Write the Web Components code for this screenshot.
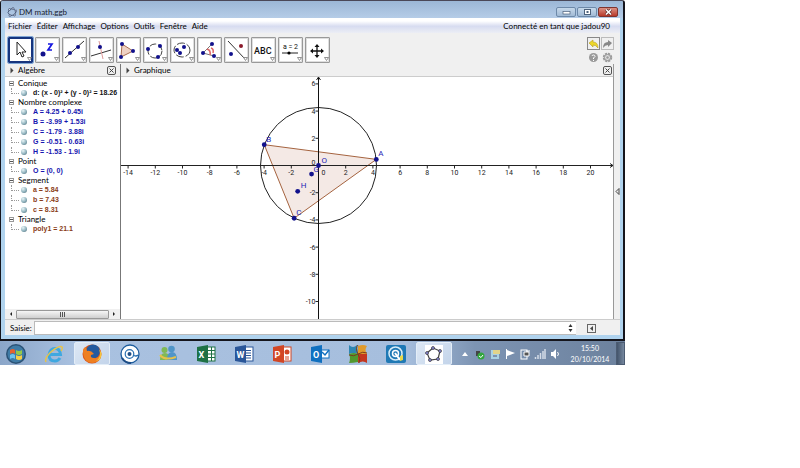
<!DOCTYPE html>
<html lang="fr">
<head>
<meta charset="utf-8">
<title>DM math.ggb</title>
<style>
body{margin:0;background:#fff;font:8px/10px Lato,"Liberation Sans",sans-serif;color:#000}
main{margin-right:175px}
</style>
</head>
<body>
<main>
<app-window name="DM math.ggb">
  <menu-bar slot="menu" account="Connecté en tant que jadou90"></menu-bar>
  <tool-bar slot="tools"></tool-bar>
  <algebra-view slot="algebra"></algebra-view>
  <graph-view slot="graph"></graph-view>
  <input-bar slot="input"></input-bar>
</app-window>
<task-bar></task-bar>
</main>
<script>
const BASE = `<style>:host,*{box-sizing:border-box}:host{display:block}button{font:inherit;color:inherit;border:0;background:none;padding:0;margin:0}svg{display:block}</style>`;
const define = (name, render) => customElements.define(name, class extends HTMLElement {
  constructor(){ super(); this.attachShadow({mode:'open'}); }
  connectedCallback(){ this.shadowRoot.innerHTML = BASE + render(this); }
});
const dot = (x,y,r=2) => `<circle cx="${x}" cy="${y}" r="${r}" fill="#11118c"/>`;

define('app-window', el => `<style>
:host{background:#b0d3ee;border:1px solid #15151c;border-top-color:#4a4858;border-right-width:2px;border-bottom-width:2px;border-radius:3px 3px 0 0}
header{display:flex;align-items:center;height:17px;padding:4px 5px 0 6px;background:linear-gradient(#9bb7d6,#b5cce7);border-radius:2px 2px 0 0}
h1{flex:1;margin:0 0 0 2px;font-size:8px;font-weight:400;line-height:12px;color:#16202e}
.ctl{display:flex;gap:1px}
.ctl button{width:20px;height:10px;border:1px solid #6d89a9;border-radius:2px;background:linear-gradient(#c6d8ea,#a1bad5);display:grid;place-items:center}
.ctl .x{background:linear-gradient(#dc9083,#b8392a);border-color:#7e342f}
.body{margin:0 3px 4px 4px;background:#f0f0f0}
.views{display:flex}
.left{flex:none;width:116px;border-right:1px solid #777}
.right{flex:1;min-width:0}
.side{flex:none;width:7px;border-left:1px solid #999;display:grid;place-items:center;padding-top:0}
</style>
<header><svg width="10" height="10" viewBox="0 0 10 10" fill="none" stroke="#33415f"><path d="M2.500 2.500 6 1.500 9 4 7.500 8 3 8.500 1 5.500Z" stroke-width=".8"/><g fill="#cfd9ee" stroke-width=".6"><circle cx="2.500" cy="2.500" r="1"/><circle cx="6" cy="1.500" r="1"/><circle cx="9" cy="4" r="1"/><circle cx="7.500" cy="8" r="1"/><circle cx="3" cy="8.500" r="1"/></g></svg><h1>${el.getAttribute('name')}</h1>
<div class="ctl"><button aria-label="Réduire"><svg width="9" height="8"><rect x="1" y="3.500" width="7" height="2.500" fill="#fff" stroke="#4d627c" stroke-width=".7"/></svg></button><button aria-label="Agrandir"><svg width="9" height="8"><rect x="1.500" y="1.500" width="6" height="5" fill="#fff" stroke="#4d627c"/><rect x="3.500" y="3" width="2" height="2" fill="#4d627c"/></svg></button><button class="x" aria-label="Fermer"><svg width="9" height="8"><path d="M2 1.500 7 6.500M7 1.500 2 6.500" stroke="#5c2d2c" stroke-width="3"/><path d="M2 1.500 7 6.500M7 1.500 2 6.500" stroke="#fff" stroke-width="1.600"/></svg></button></div></header>
<div class="body"><slot name="menu"></slot><slot name="tools"></slot>
<div class="views"><div class="left"><slot name="algebra"></slot></div><div class="right"><slot name="graph"></slot></div><div class="side"><svg width="5" height="8"><path d="M4 .5v6L1 3.500Z" fill="none" stroke="#444"/></svg></div></div>
<slot name="input"></slot></div>`);

define('menu-bar', el => `<style>
nav{display:flex;align-items:center;height:15px;padding:2px 10px 0 3px;gap:5px;background:linear-gradient(#fff 20%,#d7dcf0 55%,#eceef5)}
button{line-height:11px}
span{margin-left:auto;line-height:11px}
</style><nav>${['Fichier','Éditer','Affichage','Options','Outils','Fenêtre','Aide'].map(t=>`<button>${t}</button>`).join('')}<span>${el.getAttribute('account')}</span></nav>`);

const TOOLS = [
 ['Déplacer',`<path d="M8 4v13l3-3 2 5 2-1-2-4h4Z" fill="#fff" stroke="#222"/>`],
 ['Point',dot(7,16,2.5)+`<path d="M12 6h4l-4 6h4" fill="none" stroke="#1616e0" stroke-width="1.700"/>`],
 ['Droite',`<path d="M2 20 21 3" stroke="#333"/>`+dot(7,15)+dot(15,9)],
 ['Perpendiculaire',`<path d="M1 18 21 12" stroke="#333"/><path d="M9 3l4 18" stroke="#d99"/>`+dot(10,9)],
 ['Polygone',`<path d="M5 6 16 13 4 19Z" fill="#eed1c4" stroke="#a86d50"/>`+dot(5,6)+dot(16,13)+dot(4,19)],
 ['Cercle',`<circle cx="11" cy="13" r="7" fill="none" stroke="#444" stroke-dasharray="7 2"/>`+dot(4,11)+dot(16,8)+dot(14,19)],
 ['Ellipse',`<ellipse cx="11" cy="12" rx="8" ry="7" fill="none" stroke="#444" stroke-dasharray="8 2"/>`+dot(6,12)+dot(13,9)+dot(9,15)],
 ['Angle',`<path d="M14 6 5 15 16 18" fill="none" stroke="#777"/><path d="M9 11q4 1 3 6M13 10q3 1 2 5" stroke="#d66" stroke-width="1.500" fill="none"/>`+dot(14,6)+dot(5,15)+dot(16,18)],
 ['Symétrie',`<path d="M3 3 20 21" stroke="#333"/><circle cx="16" cy="8" r="2" fill="#8b1a2b"/>`+dot(6,16)],
 ['Texte',`<text x="2" y="16" font-size="9" font-family="Roboto" font-weight="500" fill="#111">ABC</text>`],
 ['Curseur',`<text x="4" y="11" font-size="7" font-family="Roboto" fill="#111">a = 2</text><path d="M3 15h16" stroke="#222"/><circle cx="10" cy="15" r="1.600"/>`],
 ['Déplacer graphique',`<path d="M11 7v12M5 13h12" stroke="#111" stroke-width="1.300"/><path d="M11 6l2.500 3h-5ZM11 20l2.500-3h-5ZM4 13l3-2.500v5ZM18 13l-3-2.500v5Z" fill="#111"/>`]];
define('tool-button', el => { const t = TOOLS[el.getAttribute('index')]; return `<style>
:host{flex:none;width:25px}
button{display:block;width:100%;height:26px;border:2px solid #dedede;outline:1px solid #999;outline-offset:-1px;background:#fff;border-radius:1px}
:host([active]) button{border:2px solid #17357e;outline:1px solid #80a6d5;outline-offset:0}
svg{margin:-1px 0 0 -1px}
</style><button aria-label="${t[0]}"><svg width="23" height="24" viewBox="0 0 23 24">${t[1]}<path d="M18.500 19.500h4l-2 3Z" fill="#fff" stroke="#777" stroke-width=".8"/></svg></button>`; });
define('tool-bar', () => `<style>
:host{display:flex;gap:2px;align-items:flex-start;padding:4px 5px 0 3px;height:31px}
.hist{margin-left:auto;display:grid;grid-template-columns:13px 13px;gap:1px;padding-right:1px}
.hist button{height:13px;display:grid;place-items:center}
.hist .b{border:1px solid #bbb}.hist .u{border-color:#888}
</style>${TOOLS.map((t,i)=>`<tool-button index="${i}"${i?'':' active'}></tool-button>`).join('')}
<div class="hist"><button class="b u" aria-label="Annuler"><svg width="11" height="10"><path d="M1 4 5 1v2q5 0 5 6Q8 6 5 6v2Z" fill="#ecd72a" stroke="#bba01c" stroke-width=".6"/></svg></button><button class="b" aria-label="Rétablir"><svg width="11" height="10"><path d="M10 4 6 1v2Q1 3 1 9q2-3 5-3v2Z" fill="#888"/></svg></button>
<button aria-label="Aide"><svg width="11" height="11"><circle cx="5.500" cy="5.500" r="4.500" fill="#999"/><path d="M4 4q0-1 1.500-1t1.500 1.500L5.500 6v1M5.500 8v1" fill="none" stroke="#fff"/></svg></button><button aria-label="Préférences"><svg width="11" height="11"><circle cx="5.500" cy="5.500" r="3.500" fill="#ddd" stroke="#999" stroke-width="2.500" stroke-dasharray="2 .75"/><circle cx="5.500" cy="5.500" r="3" fill="#ddd" stroke="#999"/><circle cx="5.500" cy="5.500" r="1.200" fill="#999"/></svg></button></div>`);

define('panel-header', () => `<style>
:host{display:flex;align-items:center;height:13px;padding:0 4px 0 5px;border-bottom:1px solid #ccc;background:#f0f0f0}
:host([flush]){padding-right:1px}
h2{margin:0 auto 0 4px;font-size:8px;font-weight:400;line-height:10px}
.x{width:9px;height:9px;border:1px solid #555;border-radius:2px;display:grid;place-items:center}
</style><svg width="4" height="7"><path d="M.5.5v6L3.500 3.500Z" fill="#444"/></svg><h2><slot></slot></h2><button class="x" aria-label="Fermer le panneau"><svg width="5" height="5"><path d="M.5.5l4 4M4.500.5l-4 4" stroke="#444"/></svg></button>`);

const TREE = [
 ['Conique','#111',['d: (x - 0)² + (y - 0)² = 18.26']],
 ['Nombre complexe','#1616b0',['A = 4.25 + 0.45i','B = -3.99 + 1.53i','C = -1.79 - 3.88i','G = -0.51 - 0.63i','H = -1.53 - 1.9i']],
 ['Point','#1616b0',['O = (0, 0)']],
 ['Segment','#8a3d18',['a = 5.84','b = 7.43','c = 8.31']],
 ['Triangle','#8a3d18',['poly1 = 21.1']]];
define('algebra-view', () => `<style>
:host{display:flex;flex-direction:column;height:100%;background:#fff}
ul{list-style:none;margin:0;padding:0}
.tree{flex:1;padding:2px 0 0 4px}
.g{display:flex;align-items:center;gap:4px;height:9px;line-height:9px}
.g button{width:5px;height:5px;border:1px solid #999;display:grid;place-items:center}
.g button::before{content:"";width:3px;height:1px;background:#555}
.i{display:flex;align-items:center;height:10px;margin-left:2px;font:bold 7px/10px "Liberation Sans",sans-serif;white-space:nowrap;color:var(--c)}
.i::before{content:"";flex:none;width:7px;height:5px;margin:0 2px 5px 0;border:dotted #999;border-width:0 0 1px 1px}
.i button{width:6px;height:6px;border-radius:50%;background:radial-gradient(circle at 35% 30%,#e9f5f7,#8fb2bd 55%,#3d5c69);margin-right:6px;flex:none}
.scroll{display:flex;align-items:center;gap:3px;height:10px;padding:0 4px;background:#f0f0f0}
.thumb{flex:1;height:9px;border:1px solid #999;border-radius:1px;background:linear-gradient(#f6f6f6,#cfcfcf);display:grid;place-items:center}
</style><panel-header>Algèbre</panel-header>
<ul class="tree">${TREE.map(([n,c,items])=>`<li style="--c:${c}"><div class="g"><button aria-label="Replier"></button>${n}</div><ul>${items.map(t=>`<li class="i"><button aria-label="Afficher"></button>${t}</li>`).join('')}</ul></li>`).join('')}</ul>
<div class="scroll"><button aria-label="Gauche"><svg width="4" height="6"><path d="M3 1v4L1 3Z" fill="#222"/></svg></button><button class="thumb" aria-label="Défilement"><svg width="6" height="5"><path d="M.5 0v5M2.500 0v5M4.500 0v5" stroke="#555"/></svg></button><button aria-label="Droite"><svg width="4" height="6"><path d="M1 1v4l2-2Z" fill="#222"/></svg></button></div>`);

define('graph-view', () => {
  const ox=197.5, oy=88.5, u=13.6, X=v=>ox+v*u, Y=v=>oy-v*u;
  let ticks='', labels='';
  for(let v=-14;v<=20;v+=2) if(v){ ticks+=`M${X(v)} ${oy}v3`; labels+=`<text x="${X(v)}" y="${oy+9}" text-anchor="middle">${v}</text>`; }
  for(let v=-10;v<=6;v+=2) if(v){ ticks+=`M${ox} ${Y(v)}h-3`; labels+=`<text x="${ox-3}" y="${Y(v)+2.5}" text-anchor="end">${v}</text>`; }
  labels+=`<text x="${ox-3}" y="${oy-1}" text-anchor="end">0</text><text x="${ox+3}" y="${oy+9}">0</text>`;
  const P={A:[4.25,.45,2,-3],B:[-3.99,1.53,2,-3],C:[-1.79,-3.88,2,-3],G:[-.51,-.63,2,-2],H:[-1.53,-1.9,3,-3],O:[0,0,3,-3]};
  const pt=k=>`${X(P[k][0])},${Y(P[k][1])}`;
  return `<style>
.plot{width:100%;height:242px;background:#fff;font:7px Roboto,"Liberation Sans",sans-serif;fill:#222}
</style><panel-header flush>Graphique</panel-header>
<svg class="plot"><polygon points="${pt('A')} ${pt('B')} ${pt('C')}" fill="#f4e9e5" stroke="#a5633f"/>
<circle cx="${ox}" cy="${oy}" r="58" fill="none" stroke="#222"/>
<svg x="0" y="0" width="100%" height="100%"><line x1="0" x2="100%" y1="${oy}" y2="${oy}" stroke="#222"/><line x1="${ox}" x2="${ox}" y1="0" y2="100%" stroke="#111"/></svg>
<path d="M${ox-2} 3l2-3 2 3${ticks}" fill="none" stroke="#222"/>
<svg x="100%" y="${oy-3}" overflow="visible"><path d="M-3 1l3 2-3 2" fill="none" stroke="#222"/></svg>
${labels}
${Object.entries(P).map(([k,[x,y,dx,dy]])=>dot(X(x),Y(y),2.4)+`<text x="${X(x)+dx}" y="${Y(y)+dy}" fill="#2525b5" font-size="8">${k}</text>`).join('')}</svg>`;
});

define('input-bar', () => `<style>
:host{display:flex;align-items:center;height:16px;padding:1px 24px 0 5px;border-top:1px solid #ccc}
label{line-height:10px;margin-right:2px}
.box{flex:1;display:flex;align-items:center;height:14px;background:#fff;border:1px solid #bbb;border-right:0;padding-right:3px}
input{flex:1;min-width:0;height:12px;border:0;padding:0 2px;background:none;font:inherit;outline:0}
.k{width:9px;height:9px;border:1px solid #666;margin-left:11px;display:grid;place-items:center}
</style><label for="s">Saisie:</label><div class="box"><input id="s" type="text"><svg width="5" height="8"><path d="M2.500 0 4.500 3h-4ZM2.500 8l2-3h-4Z" fill="#333"/></svg></div><button class="k" aria-label="Aide de saisie"><svg width="5" height="5"><path d="M4 0v5L1 2.500Z" fill="#444"/></svg></button>`);

const office=(c,l,extra)=>`<rect x="10" y="3" width="9" height="14" fill="#fff" stroke="${c}"/>${extra}<path d="M1 3 12 1v18L1 17Z" fill="${c}"/><text x="2.500" y="13.500" font-size="9" font-weight="700" font-family="Roboto" fill="#fff">${l}</text>`;
const APPS=[
 ['Démarrer',`<circle cx="10" cy="10" r="10" fill="#2b5276"/><circle cx="10" cy="10" r="8.500" fill="#3f7ba6"/><path d="M4 6q3-2 5 0v4q-2-2-5 0Z" fill="#e4622f"/><path d="M10 6q3 2 6 0v4q-3 2-6 0Z" fill="#93c949"/><path d="M4 11q3-2 5 0v4q-2-2-5 0Z" fill="#6cc3ef"/><path d="M10 11q3 2 6 0v4q-3 2-6 0Z" fill="#f6cf45"/>`],
 ['Internet Explorer',`<path d="M4.500 10.500h12Q16 4.500 11 4.500T5 11q0 6 6 6 3 0 5-3" fill="none" stroke="#3fa8e0" stroke-width="3"/><path d="M2 18Q0 14 8 7q8-6 10-4 1 1-1 4" fill="none" stroke="#e8c348" stroke-width="1.500"/>`],
 ['Firefox',`<circle cx="10" cy="10" r="9.500" fill="#d9541c"/><circle cx="11" cy="7.500" r="7" fill="#245a9e"/><path d="M1 6q0 13 10 13 8-1 8-11-2 7-7 6-4 0-3-3l3-1Q9 6 5 7L4 3Q1 4 1 6Z" fill="#ee7f22"/><path d="M17 5q3 8-3 12 6-1 5.500-8Z" fill="#f7c53a"/>`,1],
 ['Lecteur',`<circle cx="10" cy="10" r="9" fill="#fff" stroke="#1c5c9d" stroke-width="1.300"/><path d="M2 14q3 5 9 5" stroke="#1c4c85" stroke-width="2" fill="none"/><circle cx="9.500" cy="10" r="4.300" fill="none" stroke="#286fb0" stroke-width="1.200"/><circle cx="9.500" cy="10" r="2" fill="#1c4c85"/><path d="M13 11q3 2 5 0" fill="none" stroke="#286fb0" stroke-width="1.300"/>`],
 ['Messenger',`<circle cx="6.500" cy="6" r="3" fill="#80b956"/><path d="M2 16q0-7 5-7t4 7Z" fill="#80b956"/><circle cx="13.500" cy="5" r="3.300" fill="#5095c8"/><path d="M9 16q0-8 5-8t5 8Z" fill="#5095c8"/><path d="M2 11q5 6 16 2" fill="none" stroke="#e6c24a" stroke-width="2"/>`],
 ['Excel',office('#1e7145','X','<path d="M12 6.500h7M12 10h7M12 13.500h7M15.500 3v14" stroke="#1e7145"/>')],
 ['Word',office('#2a5699','W','<path d="M12 6.500h5M12 9h5M12 11.500h5M12 14h5" stroke="#2a5699"/>')],
 ['PowerPoint',office('#d24625','P','<circle cx="15" cy="8" r="2.500" fill="#d24625"/><path d="M13 13h4M13 15h4" stroke="#d24625"/>')],
 ['Outlook',`<rect x="10" y="6" width="9" height="8" fill="#fff" stroke="#1070c0"/><path d="M12 8l3 3 4-5" fill="none" stroke="#1070c0" stroke-width="1.500"/><path d="M1 3 12 1v18L1 17Z" fill="#1070c0"/><text x="3" y="13.500" font-size="9" font-weight="700" font-family="Roboto" fill="#fff">O</text>`],
 ['Antivirus',`<path d="M1 1q4 4 8 0l1 9q-5-2-9 0Z" fill="#2e86b2"/><path d="M10 2q5-2 9 0-3 4 0 8h-9Z" fill="#e09a2b"/><path d="M1 10q5-2 9 0v8q-5 1-9 1 2-5 0-9Z" fill="#51982e"/><path d="M10 10h9v9q-4-3-9 0Z" fill="#c4371f"/><path d="M10 10Q7 4 10 1M10 10q5-3 9-1M10 10q3 5 1 9M10 10q-4 3-9 1" stroke="#793e1c" fill="none"/>`],
 ['Nettoyage',`<rect x="0" y="1" width="20" height="18" rx="2" fill="#1f79b5"/><circle cx="9.500" cy="9.500" r="6.500" fill="none" stroke="#d9edf8" stroke-width="1.500"/><circle cx="9.500" cy="9.500" r="3" fill="none" stroke="#fff" stroke-width="1.500"/><path d="M9 9l5 7" stroke="#fff" stroke-width="2"/><path d="M14 12l3-1v5l-3 1Z" fill="#e8d84a"/>`],
 ['GeoGebra',`<rect x="1" y="1" width="18" height="19" fill="#fff"/><path d="M9 4 16 7 14 15 6 16 3 9Z" fill="none" stroke="#444" stroke-width="1.200"/>${[[9,4],[16,7],[14,15],[6,16],[3,9]].map(p=>`<circle cx="${p[0]}" cy="${p[1]}" r="1.500" fill="#8787d5" stroke="#333" stroke-width=".7"/>`).join('')}`,1]];
const TRAY=[
 ['Icônes masquées','<path d="M3 8l3-4 3 4Z" fill="#fff"/>'],
 ['USB','<path d="M2 3h4v5H2Z" fill="#444"/><circle cx="7" cy="8" r="3.500" fill="#31a63c"/><path d="M5 8l2 1.500L9 7" stroke="#fff" fill="none"/>'],
 ['Notes','<rect x="2" y="2" width="8" height="9" fill="#a9d2e4"/><path d="M4 2h7v4H4Z" fill="#e2d48a"/><path d="M4 8h4" stroke="#557"/>'],
 ['Centre de maintenance','<path d="M2.500 1v10" stroke="#fff"/><path d="M3 2l8 3-8 3Z" fill="#fff"/>'],
 ['Batterie','<rect x="2" y="2" width="6" height="9" fill="none" stroke="#fff"/><path d="M5 4h5v4H5ZM8 2v2M10 2v2" fill="#555" stroke="#fff"/>'],
 ['Réseau','<path d="M1.500 11V9M4 11V7M6.500 11V5M9 11V3M11 11V1" stroke="#d5dde8" stroke-width="1.500"/>'],
 ['Volume','<path d="M2 4h2l3-3v10L4 8H2Z" fill="#fff"/><path d="M8.500 4q2 2 0 4" stroke="#fff" fill="none"/>']];
define('task-bar', () => `<style>
:host{display:flex;align-items:stretch;height:24px;padding-top:1px;background:linear-gradient(90deg,#8ba6c9,#a9c1e0 12%,#a6bedd 65%,#7d94b3 76%,#6c819d)}
.apps{display:flex;gap:2px;flex:1}
.apps button{width:36px;display:grid;place-items:center}
.apps button:first-child{width:34px;padding-right:2px}
.apps .on{background:linear-gradient(135deg,#dce7f4,#c3d4ea);border:1px solid #e3edf7;border-radius:2px}
.tray{display:flex;align-items:center;gap:3px}
time{flex:none;width:42px;margin:0 5px 0 8px;text-align:center;color:#fff;font-size:7px;line-height:11px;align-self:center}
.desk{width:9px;background:linear-gradient(90deg,#43546b,#75879e);border:1px solid #4c5c72}
</style><div class="apps">${APPS.map(a=>`<button aria-label="${a[0]}"${a[2]?' class="on"':''}><svg width="20" height="20" viewBox="0 0 20 20">${a[1]}</svg></button>`).join('')}</div>
<div class="tray">${TRAY.map(a=>`<button aria-label="${a[0]}"><svg width="12" height="12">${a[1]}</svg></button>`).join('')}</div>
<time datetime="2014-10-20T15:50">15:50<br>20/10/2014</time><button class="desk" aria-label="Afficher le bureau"></button>`);
</script>
</body>
</html>
